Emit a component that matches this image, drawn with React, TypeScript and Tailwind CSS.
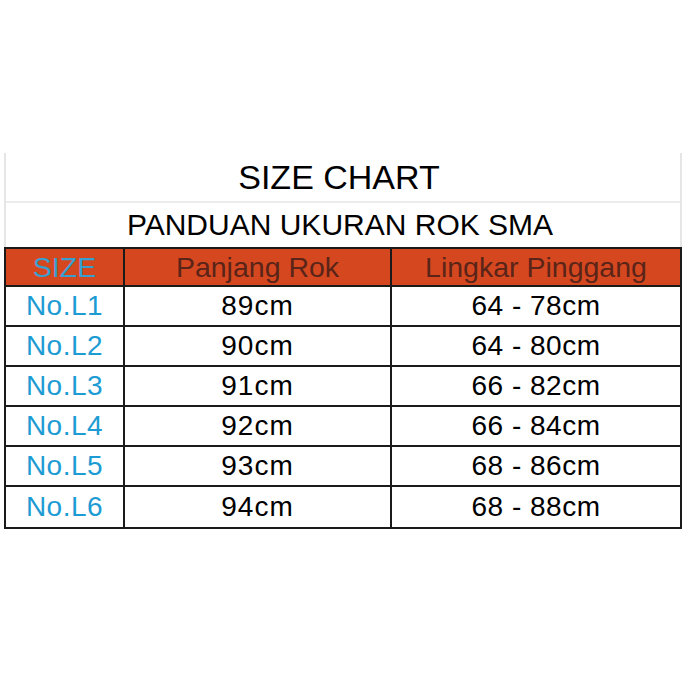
import React from 'react';

const rows = [
  { size: 'No.L1', panjang: '89cm', lingkar: '64 - 78cm' },
  { size: 'No.L2', panjang: '90cm', lingkar: '64 - 80cm' },
  { size: 'No.L3', panjang: '91cm', lingkar: '66 - 82cm' },
  { size: 'No.L4', panjang: '92cm', lingkar: '66 - 84cm' },
  { size: 'No.L5', panjang: '93cm', lingkar: '68 - 86cm' },
  { size: 'No.L6', panjang: '94cm', lingkar: '68 - 88cm' },
];

const App = () => {
  return (
    <div
      className="w-[686px] h-[686px] bg-white pt-[153px] pl-[4px]"
      style={{ fontFamily: '"Liberation Sans", Arial, sans-serif' }}
    >
      <div className="w-[678px]">
        {/* Titles */}
        <div className="border-x-2 border-[#e6e6e6]">
          <div className="h-[50px] flex items-center justify-center pr-[8px] border-b-2 border-[#ececec]">
            <h1 className="text-[34px] leading-none text-black">SIZE CHART</h1>
          </div>
          <div className="h-[44px] flex items-center justify-center pr-[6px]">
            <h2 className="text-[30px] leading-none text-black">PANDUAN UKURAN ROK SMA</h2>
          </div>
        </div>

        {/* Table */}
        <div className="border-2 border-[#1a1a1a]">
          <div className="grid grid-cols-[119px_267px_1fr] h-[38px] bg-[#d5481f] border-b-2 border-[#1a1a1a] text-[28.5px] leading-none">
            <div className="flex items-center justify-center text-[#3a9fcf] border-r-2 border-[#1a1a1a]">SIZE</div>
            <div className="flex items-center justify-center text-[#5a2419] border-r-2 border-[#1a1a1a]">Panjang Rok</div>
            <div className="flex items-center justify-center text-[#5a2419]">Lingkar Pinggang</div>
          </div>
          {rows.map((r, i) => (
            <div
              key={r.size}
              className={`grid grid-cols-[119px_267px_1fr] h-[40px] text-[28px] leading-none ${i < rows.length - 1 ? 'border-b-2 border-[#1a1a1a]' : ''}`}
            >
              <div className="flex items-center justify-center text-[#1d9bd3] tracking-[0.5px] border-r-2 border-[#1a1a1a]">{r.size}</div>
              <div className="flex items-center justify-center text-black tracking-[1px] border-r-2 border-[#1a1a1a]">{r.panjang}</div>
              <div className="flex items-center justify-center text-black tracking-[0.5px]">{r.lingkar}</div>
            </div>
          ))}
        </div>
      </div>
    </div>
  );
};

export default App;
